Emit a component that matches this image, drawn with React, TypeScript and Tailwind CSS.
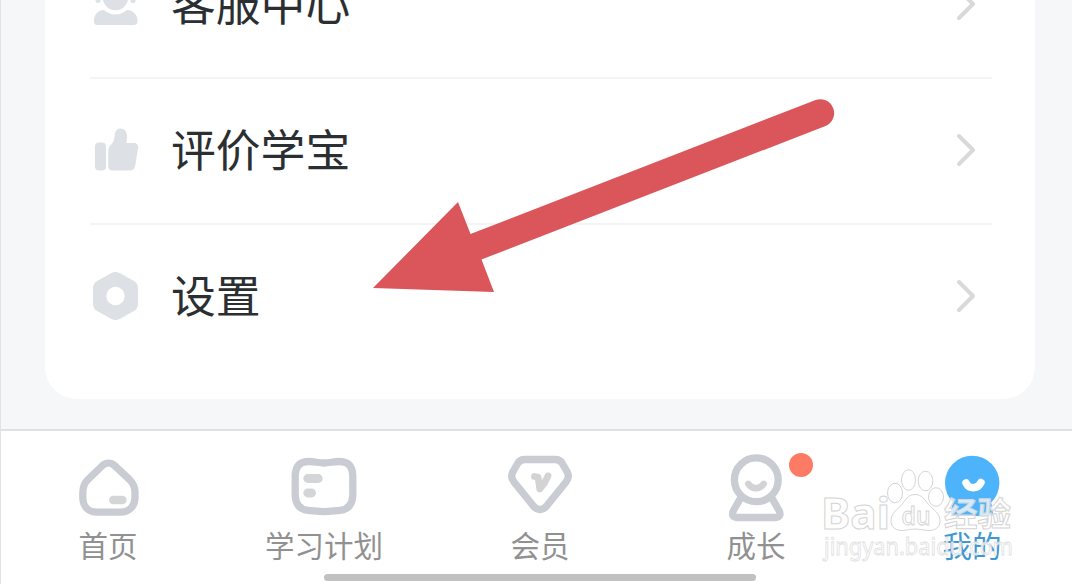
import type { ReactNode } from "react";

const rows: { label: string; icon: ReactNode }[] = [
  {
    label: "客服中心",
    icon: (
      <svg className="h-12 w-12 shrink-0 fill-[#dde1e6]" viewBox="0 0 48 48">
        <circle cx="24.500" cy="17.500" r="12.800" />
        <rect x="4.500" y="11" width="5" height="12" rx="2.500" />
        <rect x="39.500" y="11" width="5" height="12" rx="2.500" />
        <path d="M13 30C16 32.600 20 34.500 24.500 34.500S33 32.600 36 30C42.500 30.500 46.500 35 46.500 41C46.500 44 45.300 45 42.500 45H7C4 45 3 44 3 41C3 35 6.500 30.500 13 30Z" />
      </svg>
    ),
  },
  {
    label: "评价学宝",
    icon: (
      <svg className="h-12 w-12 shrink-0 fill-[#dde1e6]" viewBox="0 0 48 48">
        <rect x="4" y="16.500" width="11" height="28" rx="4" />
        <path d="M21.500 44.500C19 44.500 17.300 43 17.300 40.500V25C17.300 22 18.500 20 20.500 18C23 15.500 23.500 12 23.900 8C24.300 4.500 26.500 2.500 29.500 2.500C33.500 2.500 36 5.500 36 10C36 13 35.800 15 35.300 17H42.500C46 17 47.500 19 47 22.500L44.300 39.500C43.700 43 42 44.500 39 44.500Z" />
      </svg>
    ),
  },
  {
    label: "设置",
    icon: (
      <svg className="h-12 w-12 shrink-0" viewBox="0 0 48 48">
        <path
          className="fill-[#dde1e6]"
          d="M20 1.200Q24.500 -1.300 29 1.200L43 9Q47 11.500 47 16V32Q47 36.500 43 39L29 46.800Q24.500 49.300 20 46.800L6 39Q2 36.500 2 32V16Q2 11.500 6 9Z"
        />
        <circle className="fill-white" cx="24.500" cy="24" r="9.200" />
      </svg>
    ),
  },
];

const tabs: { label: string; active?: boolean; badge?: boolean; icon: ReactNode }[] = [
  {
    label: "首页",
    icon: (
      <>
        <path d="M30.500 13.500C34 10.300 39 10.300 42.500 13.500L57.500 27.500C61.500 31.500 63.200 35.500 63 41V46C62.500 54.500 57 60.200 48.500 60.200H25C16.500 60.200 11 54.500 10.800 46V41C10.800 35.500 12 31.500 15.500 28Z" />
        <path className="stroke-[#d3d5d7] stroke-[8.500]" d="M41.300 47.900H50.400" />
      </>
    ),
  },
  {
    label: "学习计划",
    icon: (
      <>
        <path d="M21 9.500C27 9.500 30 11 36 11S45 9.500 51 9.500C60 9.500 64.500 14 64.800 24V43C64.500 52.500 60 57.500 52 58.300C46 58.800 42 59.600 36 59.600S26 58.800 20 58.300C12 57.500 7.500 52.500 7.200 43V24C7.500 14 12 9.500 21 9.500Z" />
        <path className="stroke-[#d3d5d7] stroke-[8.800]" d="M19.700 26.500H30.300M19.700 41H23.600" />
      </>
    ),
  },
  {
    label: "会员",
    icon: (
      <>
        <path d="M21 7.500H51C54.500 7.500 56.700 8.500 58.300 11.500L63 19.500C64.800 23 64.500 27 62 30L43 53.500C39 58.800 33 58.800 29 53.500L10 30C7.500 27 7.200 23 9 19.500L13.700 11.500C15.300 8.500 17.500 7.500 21 7.500Z" />
        <path className="stroke-[#d3d3d4] stroke-[6.800]" d="M30.500 24.500L34 25L35.800 37C39.500 33 42 29 44 24" />
      </>
    ),
  },
  {
    label: "成长",
    badge: true,
    icon: (
      <>
        <circle cx="36.300" cy="27.800" r="21.900" />
        <path d="M20 47L13.500 58.500C11.300 62.800 13 65.500 17 65.500H55.500C59.500 65.500 61.300 62.800 59 58.500L52.500 47" />
        <path className="stroke-[#d3d3d5] stroke-[6.500]" d="M28.300 31.800C32 37.800 40 37.800 43.700 31.800" />
      </>
    ),
  },
  {
    label: "我的",
    active: true,
    icon: (
      <>
        <circle className="fill-[#4db3fb] stroke-none" cx="36.200" cy="31" r="27.200" />
        <path className="fill-[#4db3fb] stroke-none" d="M18 46H54L57 58C58 62 56 64 53 64H19C16 64 14 62 15 58Z" />
        <path className="stroke-white stroke-[7.500]" d="M30 31C33 37.500 41.500 37.500 45 30.500" />
      </>
    ),
  },
];

function Chevron() {
  return (
    <svg
      className="h-9 w-6 fill-none stroke-[#d9d9d9] stroke-[4]"
      viewBox="0 0 24 36"
      strokeLinecap="round"
      strokeLinejoin="round"
    >
      <path d="M5 4L19 18L5 32" />
    </svg>
  );
}

function Arrow() {
  return (
    <svg className="pointer-events-none absolute left-[359px] top-[80px] h-[230px] w-[500px]" viewBox="0 0 500 230">
      <path
        className="fill-[#da565b]"
        d="M13 208L98 122L110.500 154L455 20.300A13.500 13.500 0 0 1 465.500 46L121.500 179.500L134 212Z"
      />
    </svg>
  );
}

function Watermark() {
  return (
    <svg
      className="pointer-events-none absolute left-[811px] top-[460px] h-[110px] w-[210px] fill-white/75 stroke-[#d4d4d4] stroke-1 font-['Noto_Sans','Noto_Sans_CJK_SC',sans-serif]"
      viewBox="812 460 210 110"
    >
      <ellipse cx="895" cy="493" rx="7.500" ry="9.800" />
      <ellipse cx="908.500" cy="480" rx="7" ry="10.300" />
      <ellipse cx="925.500" cy="481" rx="7.300" ry="9.800" />
      <ellipse cx="936" cy="497" rx="7.500" ry="9.300" />
      <path d="M915 494.500C922 494.500 925 500 928.500 504.500C932.500 509 940 513 940 521C940 527 935.500 530.500 929 530.500C924 530.500 920 529 915 529S907 530.500 902 530.500C895.500 530.500 891 527 891 521C891 513 898 509 902 504.500C905.500 500 908 494.500 915 494.500Z" />
      <text x="821" y="528.500" className="text-[43px] font-bold" textLength="69" lengthAdjust="spacingAndGlyphs">
        Bai
      </text>
      <text x="901.500" y="524.500" className="fill-white text-[26px] font-medium" textLength="29" lengthAdjust="spacingAndGlyphs">
        du
      </text>
      <text x="944" y="525.500" className="text-[33px] font-bold" textLength="67" lengthAdjust="spacingAndGlyphs">
        经验
      </text>
      <text
        x="824"
        y="554.500"
        className="stroke-[#dedede] stroke-[0.800] text-[24px]"
        textLength="189"
        lengthAdjust="spacingAndGlyphs"
      >
        jingyan.baidu.com
      </text>
    </svg>
  );
}

export default function App() {
  return (
    <div className="relative flex h-[584px] w-[1072px] flex-col overflow-hidden border-l border-[#e2e3e5] bg-[#f6f7f9] font-['Noto_Sans_CJK_SC',sans-serif]">
      <main className="h-[429px] shrink-0 overflow-hidden pl-11 pr-[37px]">
        <div className="h-[399px] overflow-hidden rounded-b-[32px] bg-white pl-[45px] pr-[43px]">
          <ul className="-mt-[67px]">
            {rows.map((row) => (
              <li
                key={row.label}
                className="flex h-[146px] items-center border-b-2 border-[#f4f4f5] pb-[3px] pl-px pr-3.5 last:border-transparent"
              >
                {row.icon}
                <span className="ml-8 flex-1 pb-[2px] text-[44.800px] leading-none text-[#2c2f32]">{row.label}</span>
                <Chevron />
              </li>
            ))}
          </ul>
        </div>
      </main>
      <nav className="flex h-[155px] shrink-0 flex-col border-t-2 border-[#e0e1e4] bg-white">
        <ul className="-ml-px grid w-[1080px] grid-cols-5 pt-[21px]">
          {tabs.map((tab) => (
            <li key={tab.label} className="relative flex flex-col items-center">
              <svg
                className="h-[72px] w-[72px] fill-none stroke-[#c9ccd2] stroke-[7.300]"
                viewBox="0 0 72 72"
                strokeLinecap="round"
                strokeLinejoin="round"
              >
                {tab.icon}
              </svg>
              {tab.badge && <span className="absolute left-[141px] top-px h-6 w-6 rounded-full bg-[#fd7b65]" />}
              <span
                className={`mt-[5px] text-[29.500px] leading-[30px] ${tab.active ? "text-[#3f97d3]" : "text-[#919191]"}`}
              >
                {tab.label}
              </span>
            </li>
          ))}
        </ul>
        <div className="ml-[323px] mt-[15px] h-[7px] w-[432px] rounded-full bg-[#c1c1c1]" />
      </nav>
      <Arrow />
      <Watermark />
    </div>
  );
}
